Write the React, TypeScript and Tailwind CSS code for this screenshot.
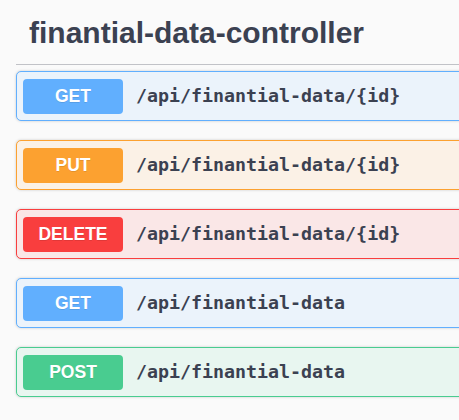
const ops = [
  { method: 'GET', path: '/api/finantial-data/{id}', box: 'border-[#61affe] bg-[#ebf3fb]', btn: 'bg-[#61affe]' },
  { method: 'PUT', path: '/api/finantial-data/{id}', box: 'border-[#fca130] bg-[#fbf1e6]', btn: 'bg-[#fca130]' },
  { method: 'DELETE', path: '/api/finantial-data/{id}', box: 'border-[#f93e3e] bg-[#fae7e7]', btn: 'bg-[#f93e3e]' },
  { method: 'GET', path: '/api/finantial-data', box: 'border-[#61affe] bg-[#ebf3fb]', btn: 'bg-[#61affe]' },
  { method: 'POST', path: '/api/finantial-data', box: 'border-[#49cc90] bg-[#e8f6f0]', btn: 'bg-[#49cc90]' },
];

export default function App() {
  return (
    <div className="h-[420px] w-full overflow-hidden bg-[#fafafa]">
      <div className="w-[640px] pl-4">
        <h4 className="border-b border-[#c1c2c7] pl-[13px] pt-[16px] pb-[14px] font-['Liberation_Sans',Arial,sans-serif] text-[30px] leading-[34px] font-bold text-[#3b4151]">
          finantial-data-controller
        </h4>
        <div className="mt-[6px]">
          {ops.map((op, i) => (
            <div
              key={i}
              className={`mb-[19px] flex h-[50px] items-center rounded-[5px] border px-[6px] shadow-[0_0_3px_rgba(0,0,0,0.19)] ${op.box}`}
            >
              <span
                className={`flex h-[35px] w-[100px] items-center justify-center rounded-[4px] font-['Liberation_Sans',Arial,sans-serif] text-[17.5px] font-bold text-white [text-shadow:0_1px_0_rgba(0,0,0,0.1)] ${op.btn}`}
              >
                {op.method}
              </span>
              <span className="pl-[13px] font-['DejaVu_Sans_Mono',monospace] text-[18.3px] font-semibold text-[#3b4151]">
                {op.path}
              </span>
            </div>
          ))}
        </div>
      </div>
    </div>
  );
}
